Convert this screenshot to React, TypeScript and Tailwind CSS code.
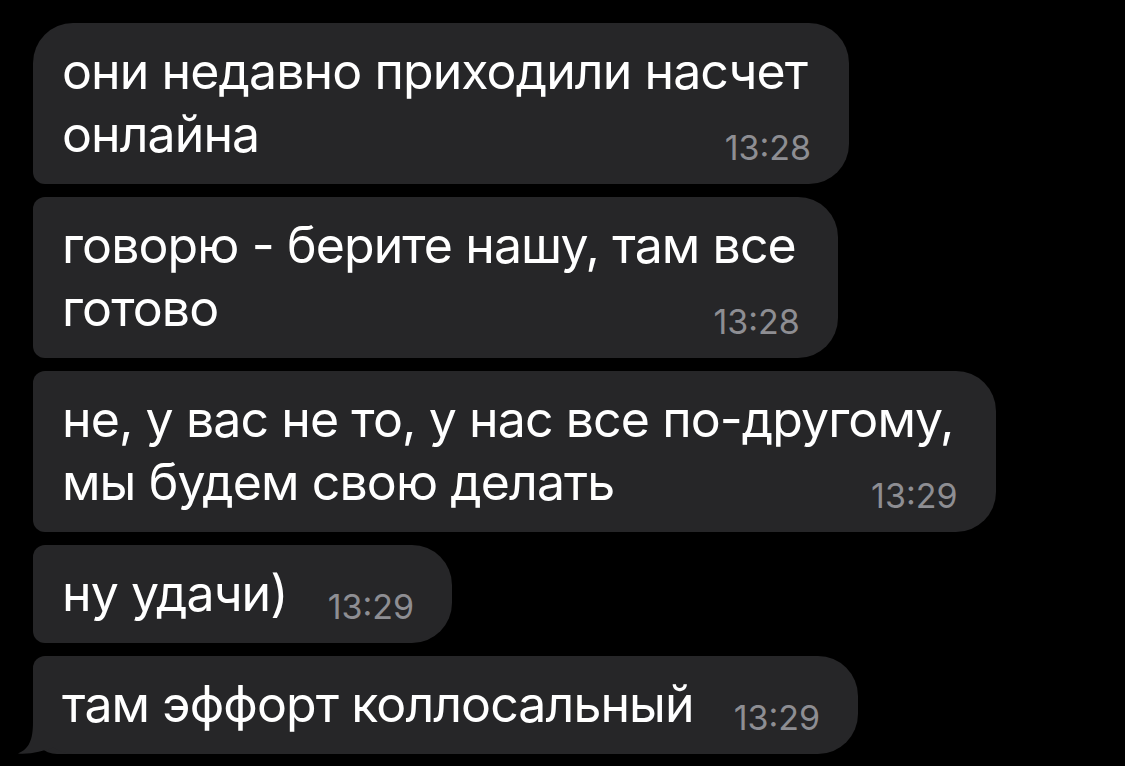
import type { ReactNode } from "react";

type Msg = {
  lines: string[];
  time: string;
  kind: "first" | "middle" | "last";
};

const MESSAGES: Msg[] = [
  { lines: ["они недавно приходили насчет", "онлайна"], time: "13:28", kind: "first" },
  { lines: ["говорю - берите нашу, там все", "готово"], time: "13:28", kind: "middle" },
  { lines: ["не, у вас не то, у нас все по-другому,", "мы будем свою делать"], time: "13:29", kind: "middle" },
  { lines: ["ну удачи)"], time: "13:29", kind: "middle" },
  { lines: ["там эффорт коллосальный"], time: "13:29", kind: "last" },
];

function Tail() {
  return (
    <svg
      className="absolute left-[-16px] bottom-0 w-[58px] h-[32px]"
      viewBox="0 0 58 32"
      fill="#262628"
    >
      <path d="M16 0 C16 18 12 27 1 31.5 C14 32.5 26 29 36 25.5 C44 30 50 32 58 32 L58 0 Z" />
    </svg>
  );
}

function Bubble({ msg }: { msg: Msg }) {
  const corners =
    msg.kind === "first"
      ? "rounded-[40px] rounded-bl-[12px]"
      : msg.kind === "middle"
        ? "rounded-[40px] rounded-tl-[12px] rounded-bl-[12px]"
        : "rounded-[40px] rounded-tl-[12px] rounded-bl-[24px]";

  const head = msg.lines.slice(0, -1);
  const last = msg.lines[msg.lines.length - 1];

  return (
    <div className={`relative w-fit bg-[#262628] ${corners} pl-[29px] pr-[42px] pt-[17px] pb-[18px]`}>
      {msg.kind === "last" && <Tail />}
      <div className="relative text-white text-[50px] leading-[63px] tracking-[-0.9px] whitespace-nowrap">
        {head.map((l) => (
          <div key={l}>{l}</div>
        ))}
        <div className="flex items-end justify-between">
          <span>{last}</span>
          <Time>{msg.time}</Time>
        </div>
      </div>
    </div>
  );
}

function Time({ children }: { children: ReactNode }) {
  return (
    <span className="ml-[40px] -mr-[4px] mb-[1px] text-[34px] leading-none tracking-normal text-[#8e8e93]">
      {children}
    </span>
  );
}

export default function App() {
  return (
    <main
      className="min-h-screen w-full bg-black pt-[23px] pl-[33px] flex flex-col items-start gap-[13px]"
      style={{ fontFamily: "Inter, 'Noto Sans', sans-serif" }}
    >
      {MESSAGES.map((m, i) => (
        <Bubble key={i} msg={m} />
      ))}
    </main>
  );
}
